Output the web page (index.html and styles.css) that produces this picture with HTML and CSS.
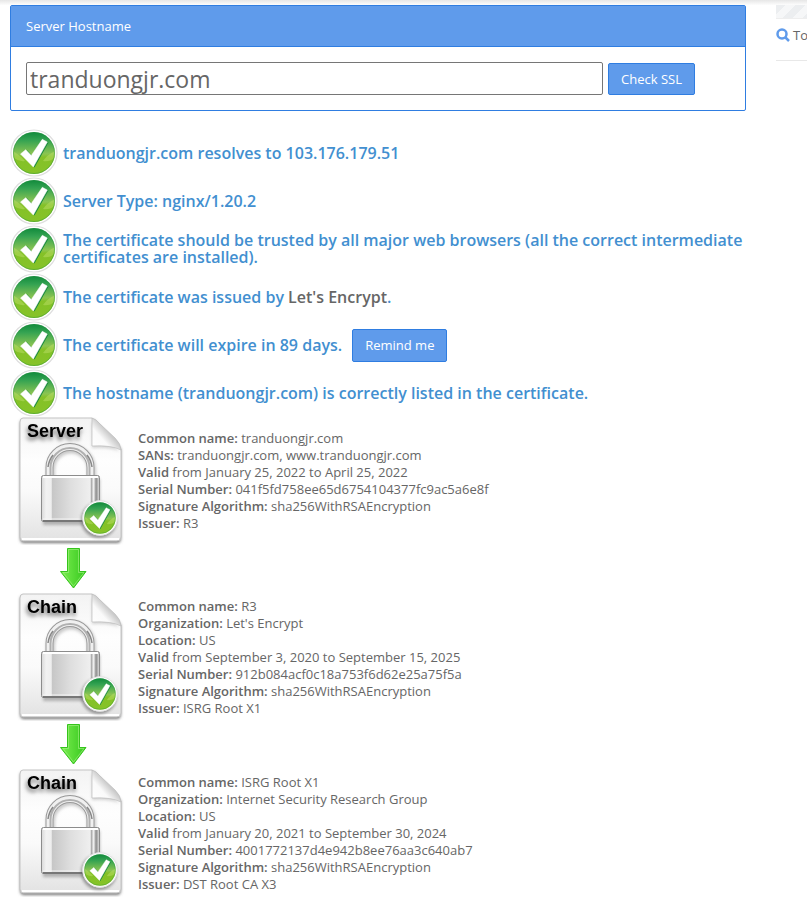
FILE: index.html
```html
<!DOCTYPE html>
<html lang="en">
<head>
<meta charset="utf-8">
<title>SSL Checker</title>
<link rel="stylesheet" href="styles.css">
</head>
<body>
<svg class="defs" aria-hidden="true">
  <defs>
    <linearGradient id="green" x1="0" y1="0" x2="0" y2="1">
      <stop offset="0" stop-color="#108a3c"/><stop offset=".2" stop-color="#35a352"/><stop offset=".52" stop-color="#8cc552"/><stop offset=".6" stop-color="#84c127"/><stop offset="1" stop-color="#86c328"/>
    </linearGradient>
    <linearGradient id="paper" x1="0" y1="0" x2="0" y2="1">
      <stop offset="0" stop-color="#f3f3f3"/><stop offset=".35" stop-color="#fefefe"/><stop offset=".6" stop-color="#fafafa"/><stop offset="1" stop-color="#e2e2e2"/>
    </linearGradient>
    <linearGradient id="fold" x1="0" y1="1" x2="1" y2="0">
      <stop offset="0" stop-color="#fff"/><stop offset=".35" stop-color="#fafafa"/><stop offset=".55" stop-color="#ccc"/>
    </linearGradient>
    <linearGradient id="steel" x1="0" y1="0" x2="1" y2="0">
      <stop offset="0" stop-color="#d8d8d8"/><stop offset=".08" stop-color="#f2f2f2"/><stop offset=".17" stop-color="#eee"/><stop offset=".18" stop-color="#c6c6c6"/><stop offset=".5" stop-color="#dedede"/><stop offset=".84" stop-color="#efefef"/><stop offset=".86" stop-color="#aaa"/><stop offset=".9" stop-color="#f4f4f4"/><stop offset=".94" stop-color="#8c8c8c"/><stop offset="1" stop-color="#e4e4e4"/>
    </linearGradient>
    <linearGradient id="leaf" x1="0" y1="0" x2="1" y2="0">
      <stop offset="0" stop-color="#7bee50"/><stop offset="1" stop-color="#35c71d"/>
    </linearGradient>
    <filter id="soft" x="-20%" y="-20%" width="140%" height="150%"><feGaussianBlur stdDeviation="1.5"/></filter>
    <symbol id="check" viewBox="0 0 48 48">
      <circle cx="24" cy="24" r="23" fill="#fff" stroke="#dedede" stroke-width="1.200"/>
      <circle cx="24" cy="24" r="21" fill="url(#green)"/>
      <path d="M3 22Q12 28 15 32Q9 33 4 29ZM45 22Q37 26 33 32Q40 33 44 29Z" fill="#b9dd66" opacity=".5"/>
      <circle cx="24" cy="24" r="20.500" fill="none" stroke="#26923e" stroke-opacity=".4"/>
      <path d="M11.500 25L16 20.700L21.500 26.500L32.500 10.300L37.500 13L23.500 38Z" fill="#16883c" transform="translate(1 .5)"/>
      <path d="M10.500 25L15.700 20.700L21.300 26.500L32.300 10.300L37.300 13L23.300 38Z" fill="#fff" stroke="#fff" stroke-width=".5"/>
    </symbol>
    <symbol id="document" viewBox="0 0 128 128">
      <path d="M13 3H84L111 32V121Q111 126 107 126H14Q10 126 10 121V7Q10 3 13 3" fill="#777" filter="url(#soft)"/>
      <path d="M13 1H82L111 32V120Q111 124 107 124H13Q10 124 10 120V5Q10 1 13 1" fill="url(#paper)" stroke="#c4c4c4"/>
      <path d="M12 122H109" stroke="#fff" stroke-width="2"/>
      <path d="M82 4L109 34Q98 30 82 31Z" fill="#888" opacity=".35" filter="url(#soft)"/>
      <path d="M82 1Q86 2 90 7L105 21Q111 27 111 33Q102 28 82 29Z" fill="url(#fold)" stroke="#bbb" stroke-width=".7"/>
      <path d="M33 62H90V108H33Z" fill="#777" opacity=".5" filter="url(#soft)"/>
      <path d="M39.500 62V50.500A20.500 20.500 0 0 1 80.500 50.500V62" transform="translate(1 2)" fill="none" stroke="#999" stroke-width="9" opacity=".5" filter="url(#soft)"/>
      <path d="M39.500 62V50.500A20.500 20.500 0 0 1 80.500 50.500V62" fill="none" stroke="#999" stroke-width="8"/>
      <path d="M39.500 62V50.500A20.500 20.500 0 0 1 80.500 50.500V62" fill="none" stroke="#f0f0f0" stroke-width="6"/>
      <path d="M40.500 62V50.500A19.500 19.500 0 0 1 79.500 50.500V62" fill="none" stroke="#b0b0b0" stroke-width="2"/>
      <path d="M38 50Q39 43 43 38M82 50Q81 43 77 38" fill="none" stroke="#888" stroke-width="1.500"/>
      <rect x="31.500" y="58.500" width="58" height="46" rx="2" fill="url(#steel)" stroke="#8c8c8c"/>
      <path d="M33 60H88" stroke="#fff" stroke-width="2"/>
      <path d="M33 102H88" stroke="#f5f5f5"/>
      <path d="M33 104H88" stroke="#777" stroke-width="2"/>
      <circle cx="89" cy="103" r="18" fill="#555" opacity=".55" filter="url(#soft)"/>
      <circle cx="90" cy="101" r="17.500" fill="#fff"/>
      <use href="#check" x="72" y="83" width="36" height="36"/>
    </symbol>
    <symbol id="arrow" viewBox="0 0 48 48">
      <path d="M17.500 3.500H29.500V26.500H36L23.500 43L10.500 26.500H17.500Z" fill="url(#leaf)" stroke="#35c41c"/>
      <path d="M13 27.500H18.500V4.500H28.500V27.500H34L23.500 41Z" fill="none" stroke="#a5f286" stroke-opacity=".6"/>
    </symbol>
  </defs>
</svg>
<div class="top-shadow"></div>
<div class="page">
  <main>
    <form class="panel">
      <label class="panel-title" for="host">Server Hostname</label>
      <div class="panel-body">
        <input id="host" type="text" value="tranduongjr.com">
        <button type="button">Check SSL</button>
      </div>
    </form>
    <ul class="checks">
      <li><svg><use href="#check"/></svg><p>tranduongjr.com resolves to 103.176.179.51</p></li>
      <li><svg><use href="#check"/></svg><p>Server Type: nginx/1.20.2</p></li>
      <li><svg><use href="#check"/></svg><p>The certificate should be trusted by all major web browsers (all the correct intermediate certificates are installed).</p></li>
      <li><svg><use href="#check"/></svg><p>The certificate was issued by <a href="#issuer">Let's Encrypt</a>.</p></li>
      <li><svg><use href="#check"/></svg><p>The certificate will expire in 89 days.</p><button type="button" class="remind">Remind me</button></li>
      <li><svg><use href="#check"/></svg><p>The hostname (tranduongjr.com) is correctly listed in the certificate.</p></li>
    </ul>
    <section class="cert">
      <svg viewBox="0 0 128 128"><use href="#document"/><text x="17" y="20">Server</text></svg>
      <div><b>Common name:</b> tranduongjr.com<br><b>SANs:</b> tranduongjr.com, www.tranduongjr.com<br><b>Valid</b> from January 25, 2022 to April 25, 2022<br><b>Serial Number:</b> 041f5fd758ee65d6754104377fc9ac5a6e8f<br><b>Signature Algorithm:</b> sha256WithRSAEncryption<br><b>Issuer:</b> R3</div>
    </section>
    <div class="link"><svg><use href="#arrow"/></svg></div>
    <section class="cert">
      <svg viewBox="0 0 128 128"><use href="#document"/><text x="17" y="20">Chain</text></svg>
      <div><b>Common name:</b> R3<br><b>Organization:</b> Let's Encrypt<br><b>Location:</b> US<br><b>Valid</b> from September 3, 2020 to September 15, 2025<br><b>Serial Number:</b> 912b084acf0c18a753f6d62e25a75f5a<br><b>Signature Algorithm:</b> sha256WithRSAEncryption<br><b>Issuer:</b> ISRG Root X1</div>
    </section>
    <div class="link"><svg><use href="#arrow"/></svg></div>
    <section class="cert">
      <svg viewBox="0 0 128 128"><use href="#document"/><text x="17" y="20">Chain</text></svg>
      <div><b>Common name:</b> ISRG Root X1<br><b>Organization:</b> Internet Security Research Group<br><b>Location:</b> US<br><b>Valid</b> from January 20, 2021 to September 30, 2024<br><b>Serial Number:</b> 4001772137d4e942b8ee76aa3c640ab7<br><b>Signature Algorithm:</b> sha256WithRSAEncryption<br><b>Issuer:</b> DST Root CA X3</div>
    </section>
  </main>
  <aside>
    <div class="stripes"></div>
    <div class="tool"><svg viewBox="0 0 14 14"><circle cx="6" cy="6" r="4.500"/><path d="M9.500 9.500L13 13"/></svg><span>To</span></div>
  </aside>
</div>
</body>
</html>
```

FILE: styles.css
```css
* { box-sizing: border-box; }
body {
  margin: 0;
  background: #fff;
  color: #666;
  font: 13px/17px "Open Sans", "Noto Sans", sans-serif;
}
.defs { position: absolute; width: 0; height: 0; }
.top-shadow { height: 5px; background: linear-gradient(#e6e6e6, #fdfdfd); }
.page {
  display: grid;
  grid-template-columns: minmax(0, 1fr) 31px;
  gap: 30px;
  padding-left: 10px;
}
.panel {
  border: 1px solid #2f7de1;
  border-radius: 2px;
}
.panel-title {
  display: block;
  padding: 12px 15px 11px;
  background: #5f9beb;
  border-bottom: 1px solid #2f7de1;
  color: #fff;
}
.panel-body {
  display: flex;
  align-items: flex-end;
  gap: 5px;
  padding: 15px;
}
input {
  flex: 0 1 577px;
  min-width: 0;
  height: 33px;
  padding: 0 3px;
  border: 1px solid #767676;
  border-radius: 2px;
  color: #666;
  font: 23px/30px "Open Sans", "Noto Sans", sans-serif;
}
button {
  height: 32px;
  padding: 0 12px;
  border: 1px solid #2f7de1;
  border-radius: 2px;
  background: #5f9beb;
  color: #fff;
  font: 13px/17px "Open Sans", "Noto Sans", sans-serif;
  white-space: nowrap;
}
.checks {
  margin: 18px 0 0;
  padding: 0;
  list-style: none;
}
.checks li {
  display: flex;
  align-items: center;
  height: 48px;
  color: #428fd0;
  font-size: 16px;
  font-weight: 600;
}
.checks svg { flex: none; width: 48px; height: 48px; margin-right: 5px; }
.checks p { margin: 0; }
.checks a { color: #666; text-decoration: none; }
.remind { height: 33px; margin-left: 10px; }
.cert { display: flex; align-items: center; }
.cert svg { flex: none; width: 128px; height: 128px; }
.cert text {
  font: bold 18px "Liberation Sans", Arial, sans-serif;
  fill: #000;
  filter: drop-shadow(-1px 3px 2px rgba(0, 0, 0, .6));
}
b { font-weight: 600; }
.link { width: 128px; height: 48px; text-align: center; }
.link svg { width: 48px; height: 48px; }
aside { overflow: hidden; white-space: nowrap; }
.stripes {
  height: 14px;
  border-bottom: 1px solid #eee;
  background: repeating-linear-gradient(135deg, #eceef0 0 7px, #f6f7f8 7px 14px);
}
.tool {
  display: flex;
  align-items: center;
  gap: 3px;
  height: 42px;
  padding-bottom: 9px;
  border-bottom: 1px solid #e8e8e8;
}
.tool svg { flex: none; width: 14px; height: 14px; fill: none; stroke: #5f9beb; stroke-width: 2.5; }
```
